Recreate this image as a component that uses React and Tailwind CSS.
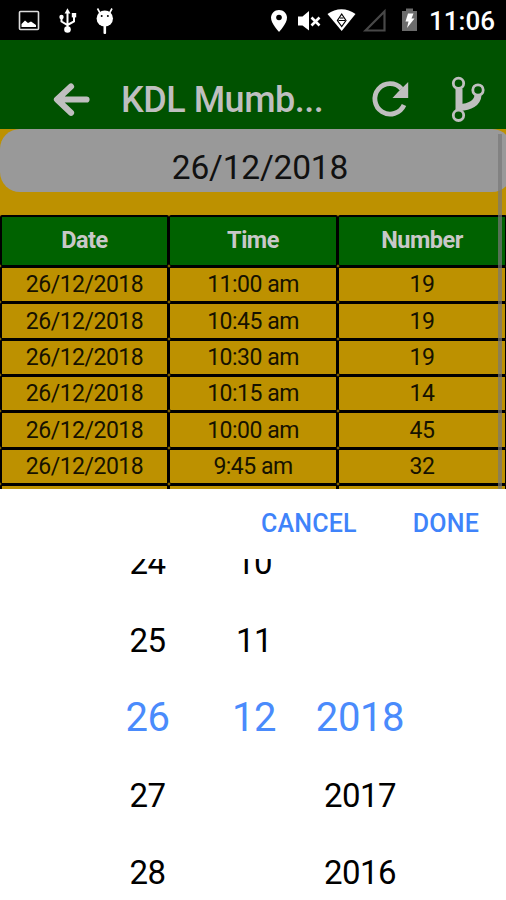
import { clsx } from "clsx";

const results = [
  { time: "11:00 am", number: 19, height: "h-[36px]" },
  { time: "10:45 am", number: 19, height: "h-[37px]" },
  { time: "10:30 am", number: 19, height: "h-[36px]" },
  { time: "10:15 am", number: 14, height: "h-[36px]" },
  { time: "10:00 am", number: 45, height: "h-[37px]" },
  { time: "9:45 am", number: 32, height: "h-[36px]" },
];

const days = ["24", "25", "26", "27", "28"];
const months = ["10", "11", "12", "", ""];
const years = ["", "", "2018", "2017", "2016"];

function StatusBar() {
  return (
    <div className="h-10 shrink-0 bg-black flex items-center text-white">
      <svg width="125" height="40" viewBox="0 0 125 40">
        <rect x="19.5" y="11.5" width="19" height="18" rx="1" fill="none" stroke="#ddd" strokeWidth="1.6" />
        <path d="M21.5 27 V24 L25 20.5 L28 23 L31 21.5 L36 25 V27 Z" fill="#fff" />
        <path d="M67.5 12 V29 M61.5 18 V21.5 L67.5 25 L74 21.5 V16" stroke="#fff" strokeWidth="2" fill="none" />
        <g fill="#fff">
          <path d="M64.6 13.4 L67.5 8.3 L70.4 13.4 Z" />
          <circle cx="61.5" cy="17" r="2.2" />
          <rect x="71.8" y="13" width="4.4" height="4.4" />
          <circle cx="67.5" cy="29.5" r="3.3" />
          <ellipse cx="104.8" cy="18.5" rx="8.2" ry="8" />
          <rect x="103.5" y="25" width="2.6" height="9" rx="1" />
        </g>
        <path d="M100 13 L97.5 8.5 M109.6 13 L112 8.5" stroke="#fff" strokeWidth="1.6" />
        <circle cx="101.7" cy="16" r="1" fill="#000" />
        <circle cx="107.9" cy="16" r="1" fill="#000" />
      </svg>
      <svg className="ml-auto" width="160" height="40" viewBox="265 0 160 40">
        <path d="M279 10 C274.5 10 271 13.4 271 17.8 C271 23.5 279 32 279 32 C279 32 287 23.5 287 17.8 C287 13.4 283.5 10 279 10 Z" fill="#fff" />
        <circle cx="279" cy="17.5" r="2.8" fill="#000" />
        <path d="M298 16.5 H302.5 L309 11 V30.5 L302.5 25.5 H298 Z" fill="#fff" />
        <path d="M311.5 17.5 L319.5 25.5 M319.5 17.5 L311.5 25.5" stroke="#fff" strokeWidth="2.6" />
        <path d="M327.5 14 C336 7.5 347 7.5 355.5 14 L341.7 31 Z" fill="#fff" />
        <path d="M341.7 14 L346 20.5 L341.7 26.5 L337.4 20.5 Z" fill="none" stroke="#000" strokeWidth="1.2" />
        <path d="M338.5 20.5 H345 M340 18 H343.5" stroke="#000" strokeWidth="1.2" />
        <path d="M365.5 30.5 L384.5 11.5 V30.5 Z" fill="none" stroke="#484848" strokeWidth="2.2" />
        <path d="M406 8.5 H413 V11 H417 V31 H402 V11 H406 Z" fill="#6c6c6c" />
        <path d="M408 13.5 H413.5 L411.5 18.5 H414.5 L407 28 L408.5 21.5 H405.5 Z" fill="#fff" />
      </svg>
      <span className="w-[81px] pl-[4px] pt-[2px] text-[26px] leading-10 font-medium">11:06</span>
    </div>
  );
}

function Header() {
  return (
    <div className="h-[89px] shrink-0 bg-[#005200] flex items-start pt-[32px] pl-[50px] text-[#bfbfbf]">
      <svg width="44" height="56" viewBox="50 72 44 56" fill="none" stroke="currentColor" strokeWidth="6.2" strokeLinecap="round" strokeLinejoin="round">
        <path d="M71 86.5 L57 99.5 L71 112.8 M57.5 99.5 H86.5" />
      </svg>
      <h1 className="ml-[27px] w-[240px] text-[36px] leading-[56px] font-medium whitespace-nowrap tracking-[-0.5px]">KDL Mumb...</h1>
      <svg width="145" height="56" viewBox="361 72 145 56" fill="none" stroke="currentColor">
        <path d="M401.5 88.8 A15.2 15.2 0 1 0 404 105" strokeWidth="4.8" />
        <path d="M408.2 82 V98 H392.5 L398 92 Z" fill="currentColor" stroke="none" />
        <path d="M459 89 V110" strokeWidth="7" />
        <path d="M478 95 C477.5 103 470 107 459.5 107.5" strokeWidth="7" />
        <g fill="#005200" strokeWidth="2.8">
          <circle cx="458.5" cy="83.3" r="5.2" />
          <circle cx="478" cy="90" r="5.2" />
          <circle cx="458.5" cy="115.3" r="5.2" />
        </g>
      </svg>
    </div>
  );
}

function Cell({ children, first, head }) {
  return (
    <div
      className={clsx(
        "border-t-2 border-b border-black rounded-[2px] flex items-center justify-center leading-none",
        first ? "border-x-2" : "border-l border-r-2",
        head ? "bg-[#006200] text-[#c8c8c8] font-bold text-[23.5px] tracking-[-0.5px]" : "text-[#161200] text-[23px] tracking-[-0.5px]"
      )}
    >
      {children}
    </div>
  );
}

function ResultsTable() {
  return (
    <div className="mt-[23px]">
      <div className="h-[51px] grid grid-cols-[169px_169px_169px]">
        <Cell first head>Date</Cell>
        <Cell head>Time</Cell>
        <Cell head>Number</Cell>
      </div>
      {results.map((row) => (
        <div key={row.time} className={clsx("grid grid-cols-[169px_169px_169px]", row.height)}>
          <Cell first>26/12/2018</Cell>
          <Cell>{row.time}</Cell>
          <Cell>{row.number}</Cell>
        </div>
      ))}
      <div className="h-9 grid grid-cols-[169px_169px_169px]">
        <Cell first />
        <Cell />
        <Cell />
      </div>
    </div>
  );
}

function PickerColumn({ values, className }) {
  return (
    <div className={clsx("flex flex-col items-center", className)}>
      {values.map((value, i) => (
        <div
          key={i}
          className={clsx(
            "h-[77.5px] shrink-0 flex items-center",
            i === 2 ? "text-[40px] tracking-[-0.4px] text-[#4a8bfc]" : "text-[33px] tracking-[-0.6px] text-black"
          )}
        >
          {value}
        </div>
      ))}
    </div>
  );
}

function DatePicker() {
  return (
    <div className="flex-1 min-h-0 bg-white flex flex-col">
      <div className="h-[70px] shrink-0 flex items-center justify-end gap-[56px] pr-[27px] text-[25px] font-medium text-[#3f83fa]">
        <button className="tracking-[0.2px]">CANCEL</button>
        <button className="tracking-[0.2px]">DONE</button>
      </div>
      <div className="flex-1 min-h-0 overflow-hidden flex pl-[94px]">
        <PickerColumn values={days} className="w-[107px] -mt-[35px]" />
        <PickerColumn values={months} className="w-[106px] -mt-[35px]" />
        <PickerColumn values={years} className="w-[106px] -mt-[35px]" />
      </div>
    </div>
  );
}

export default function App() {
  return (
    <div className="w-[506px] h-[900px] overflow-hidden flex flex-col bg-[#bd9100] font-[Roboto,sans-serif]">
      <StatusBar />
      <Header />
      <div className="h-[360px] shrink-0 overflow-hidden relative">
        <div className="w-[512px] h-[63px] rounded-[20px] bg-[#999] flex items-center justify-center pt-[15px] pl-[8px] text-[33.5px] tracking-[-0.2px] text-[#111]">
          26/12/2018
        </div>
        <ResultsTable />
        <div className="absolute top-[5px] bottom-0 right-[4px] w-[4px] bg-[#777]/70" />
      </div>
      <DatePicker />
    </div>
  );
}
